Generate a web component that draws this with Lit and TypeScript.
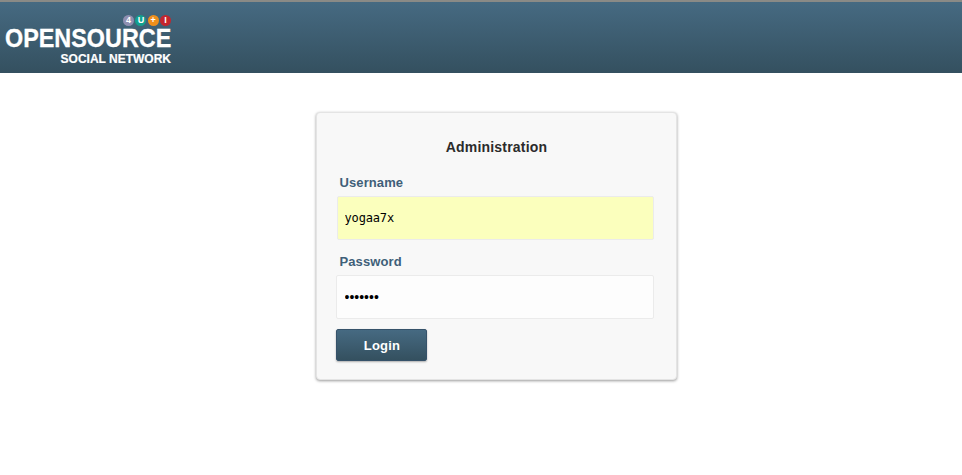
import { LitElement, html, css } from 'lit';
import { customElement } from 'lit/decorators.js';

@customElement('app-root')
export class AppRoot extends LitElement {
  static styles = css`
    :host {
      display: block;
      min-height: 475px;
      background: #fff;
      font-family: "Liberation Sans", Arial, sans-serif;
    }
    .topbar {
      height: 71px;
      border-top: 2px solid #8a8a86;
      background: linear-gradient(to bottom, #466a82, #34505f);
      display: flex;
    }
    .logo {
      margin-left: 5px;
      width: 166px;
      display: flex;
      flex-direction: column;
      align-items: flex-end;
      color: #fff;
      font-weight: bold;
    }
    .dots {
      display: flex;
      gap: 1.3px;
      margin-top: 13px;
      height: 11px;
    }
    .dot {
      width: 11px;
      height: 11px;
      border-radius: 50%;
      font-size: 9px;
      line-height: 11px;
      text-align: center;
    }
    .d1 { background: #8f8fb0; }
    .d2 { background: #12a08f; }
    .d3 { background: #ee8f1c; }
    .d4 { background: #c4262e; }
    .name {
      font-size: 25px;
      line-height: 25px;
      height: 25px;
      white-space: nowrap;
      align-self: flex-start;
      transform: scaleX(0.935);
      transform-origin: left;
      -webkit-text-stroke: 0.3px #fff;
    }
    .sub {
      font-size: 12px;
      line-height: 14px;
      margin-top: 1px;
      white-space: nowrap;
      -webkit-text-stroke: 0.2px #fff;
    }
    .page {
      display: flex;
      justify-content: center;
      padding: 39px 31px 0;
    }
    .card {
      box-sizing: border-box;
      width: 361px;
      height: 268px;
      margin-left: 30px;
      padding: 0 22px 0 19px;
      background: #f8f8f8;
      border-radius: 4px;
      border: 1px solid #e4e4e4;
      box-shadow: 0 1px 3px rgba(0, 0, 0, 0.4);
    }
    h1 {
      margin: 26px 0 0;
      font-size: 14px;
      line-height: 16px;
      font-weight: bold;
      color: #2b2b2b;
      text-align: center;
      letter-spacing: 0.2px;
      padding-left: 4px;
    }
    label {
      display: block;
      margin: 0 0 0 4px;
      font-size: 13px;
      line-height: 15px;
      font-weight: bold;
      color: #3f5f78;
      letter-spacing: 0.1px;
    }
    .user-label { margin-top: 20px; }
    .pass-label { margin-top: 14px; }
    .field {
      box-sizing: border-box;
      display: block;
      width: 318px;
      height: 44px;
      border: 1px solid #ebebeb;
      border-radius: 2px;
      outline: none;
      color: #000;
    }
    .user {
      margin: 6px 0 0 1px;
      width: 317px;
      padding: 0 7px;
      background: #fbffbd;
      font-family: "DejaVu Sans Mono", "Liberation Mono", monospace;
      font-size: 12px;
      letter-spacing: -0.15px;
    }
    .pass {
      margin: 6px 0 0 0;
      padding: 0 8px;
      background: #fdfdfd;
      font-family: "Liberation Sans", Arial, sans-serif;
      font-size: 14px;
    }
    button {
      display: block;
      box-sizing: border-box;
      margin: 10px 0 0 0;
      width: 91px;
      height: 32px;
      padding: 0 0 0 2px;
      border: 1px solid #36526a;
      border-radius: 2px;
      background: linear-gradient(to bottom, #466a82, #34505f);
      box-shadow: 0 1px 2px rgba(0, 0, 0, 0.3);
      color: #fff;
      font-family: "Liberation Sans", Arial, sans-serif;
      font-size: 13px;
      font-weight: bold;
      letter-spacing: 0.2px;
    }
  `;

  render() {
    return html`
      <div class="topbar">
        <div class="logo">
          <div class="dots">
            <span class="dot d1">4</span>
            <span class="dot d2">U</span>
            <span class="dot d3">+</span>
            <span class="dot d4">I</span>
          </div>
          <div class="name">OPENSOURCE</div>
          <div class="sub">SOCIAL NETWORK</div>
        </div>
      </div>
      <div class="page">
        <div class="card">
          <h1>Administration</h1>
          <label class="user-label">Username</label>
          <input class="field user" type="text" .value=${'yogaa7x'} />
          <label class="pass-label">Password</label>
          <input class="field pass" type="password" .value=${'1234567'} />
          <button>Login</button>
        </div>
      </div>
    `;
  }
}
